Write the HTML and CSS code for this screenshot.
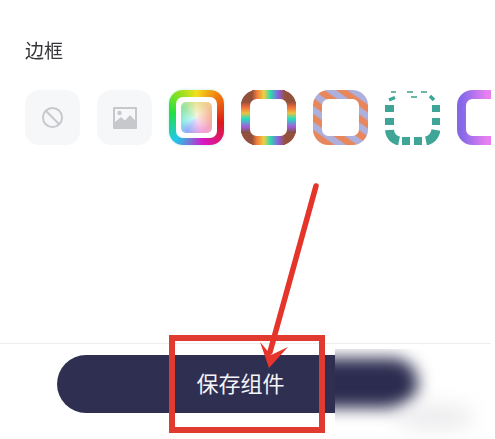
FILE: index.html
```html
<!DOCTYPE html>
<html lang="zh">
<head>
<meta charset="utf-8">
<title>边框</title>
<link rel="stylesheet" href="styles.css">
</head>
<body>
<main class="screen">
  <section class="panel">
    <h2 class="title">边框</h2>
    <div class="swatches">
      <div class="swatch plain">
        <svg class="icon" viewBox="0 0 24 24"><circle cx="12" cy="12" r="10" fill="none" stroke="#c6c8cb" stroke-width="2"/><path d="M5 5 19 19" stroke="#c6c8cb" stroke-width="2"/></svg>
      </div>
      <div class="swatch plain">
        <svg class="icon-img" viewBox="0 0 24 22"><path fill="#c6c8cb" fill-rule="evenodd" d="M1 0h22a1 1 0 0 1 1 1v20a1 1 0 0 1-1 1H1a1 1 0 0 1-1-1V1a1 1 0 0 1 1-1Zm1 2v13l6-5 4 3.500L17 8l5 5.500V2Z"/><circle cx="6.500" cy="6" r="2.200" fill="#c6c8cb"/></svg>
      </div>
      <div class="swatch rainbow"><div class="rainbow-gap"><div class="rainbow-core"></div></div></div>
      <svg class="swatch" viewBox="0 0 55 55">
        <defs>
          <linearGradient id="rbh"><stop offset="0" stop-color="#96503a"/><stop offset=".14" stop-color="#ee7a3a"/><stop offset=".36" stop-color="#f0d040"/><stop offset=".56" stop-color="#30d8b0"/><stop offset=".8" stop-color="#8a5fe0"/><stop offset="1" stop-color="#96503a"/></linearGradient>
          <linearGradient id="rbv" x2="0" y2="1"><stop offset="0" stop-color="#96503a"/><stop offset=".16" stop-color="#ee6a3a"/><stop offset=".36" stop-color="#eec040"/><stop offset=".54" stop-color="#20e0c0"/><stop offset=".78" stop-color="#a060e0"/><stop offset="1" stop-color="#80503a"/></linearGradient>
        </defs>
        <rect x="4.500" y="4.500" width="46" height="46" rx="11" fill="none" stroke="#93503c" stroke-width="9"/>
        <path d="M11 4.500H44M11 50.500H44" stroke="url(#rbh)" stroke-width="9"/>
        <path d="M4.500 12V43M50.500 12V43" stroke="url(#rbv)" stroke-width="9"/>
      </svg>
      <svg class="swatch" viewBox="0 0 55 55">
        <defs>
          <pattern id="stripes" width="13" height="13" patternUnits="userSpaceOnUse" patternTransform="rotate(-55)">
            <rect width="13" height="13" fill="#adb0dc"/><rect width="6.500" height="13" fill="#e8865c"/>
          </pattern>
        </defs>
        <rect x="4.500" y="4.500" width="46" height="46" rx="11" fill="none" stroke="url(#stripes)" stroke-width="9"/>
      </svg>
      <svg class="swatch" viewBox="0 0 55 55">
        <path d="M0 18.500H9M0 31.500H9M47 18.500H56M47 31.500H56" stroke="#3fa596" stroke-width="7" fill="none"/>
        <path d="M4.500 40C5 46 9 50 14 51" fill="none" stroke="#3fa596" stroke-width="9"/>
        <path d="M51 40C50 46 46 50 41 51" fill="none" stroke="#3fa596" stroke-width="9"/>
        <path d="M21 47V55M33 47V55" stroke="#3fa596" stroke-width="8" fill="none"/>
        <path d="M4 10 10 7.500M45 6 49 10" stroke="#3fa596" stroke-width="3.500" fill="none"/>
        <path d="M6 2H11M22 2H28M36 2H42M26 7H32" stroke="#6fb5a8" stroke-width="2" fill="none"/>
      </svg>
      <svg class="swatch" viewBox="0 0 55 55">
        <defs>
          <linearGradient id="neon" x2="0" y2="1"><stop offset="0" stop-color="#8468e8"/><stop offset=".5" stop-color="#88d8fa"/><stop offset="1" stop-color="#7c60ec"/></linearGradient>
          <linearGradient id="neonh"><stop offset="0" stop-color="#8468e8"/><stop offset=".55" stop-color="#e880f2"/></linearGradient>
        </defs>
        <rect x="4.500" y="4.500" width="46" height="46" rx="11" fill="none" stroke="url(#neonh)" stroke-width="9"/>
        <path d="M4.500 14V41" stroke="url(#neon)" stroke-width="9"/>
      </svg>
    </div>
  </section>
  <footer class="footer">
    <button class="save">保存组件</button>
  </footer>
  <div class="smudge"><div class="smudge-bar"></div><div class="smudge-shade"></div></div>
  <div class="highlight"></div>
  <svg class="arrow" viewBox="0 0 495 439">
    <path d="M316 186 270 352" stroke="#e5352b" stroke-width="5.500" stroke-linecap="round" fill="none"/>
    <path d="M260 342 269 368 288 347 271 355Z" fill="#e8352c"/>
  </svg>
</main>
</body>
</html>
```

FILE: styles.css
```css
html, body {
  margin: 0;
  height: 100%;
  background: #fff;
  overflow: hidden;
}
.screen {
  position: relative;
  width: 491px;
  height: 439px;
  display: flex;
  flex-direction: column;
  overflow: hidden;
  font-family: "Noto Sans CJK SC", "Noto Sans", sans-serif;
  filter: blur(.45px);
}
.panel {
  padding: 40px 0 0 25px;
}
.title {
  margin: 0;
  font-size: 19px;
  line-height: 19px;
  font-weight: 400;
  color: #35353a;
}
.swatches {
  display: flex;
  gap: 17px;
  margin-top: 31px;
  width: 480px;
}
.swatch {
  flex: none;
  width: 55px;
  height: 55px;
  box-sizing: border-box;
}
.plain {
  display: flex;
  align-items: center;
  justify-content: center;
  border-radius: 14px;
  background: #f6f7f9;
}
.icon { width: 23px; height: 23px; }
.icon-img { width: 24px; height: 22px; }
.rainbow {
  padding: 7px;
  border-radius: 14px;
  background: conic-gradient(#f4e020, #ee7010 14%, #e01818 28%, #d818c8 46%, #20c8e8 62%, #20e040 78%, #90e020 90%, #f4e020);
  box-shadow: 0 0 3px rgba(120, 220, 200, .5);
}
.rainbow-gap {
  height: 100%;
  padding: 5px;
  box-sizing: border-box;
  border-radius: 7px;
  background: #fff;
}
.rainbow-core {
  height: 100%;
  border-radius: 5px;
  background:
    radial-gradient(circle, rgba(255, 255, 255, .75), rgba(255, 255, 255, .15) 70%),
    conic-gradient(#e8e080, #f4a080 25%, #f090d8 45%, #80a0f8 60%, #70e8e0 70%, #80e090 85%, #e8e080);
}
.footer {
  margin-top: auto;
  height: 84px;
  padding-top: 11px;
  border-top: 1.500px solid #eeeeee;
}
.save {
  display: block;
  width: 367px;
  height: 58px;
  margin-left: 57px;
  padding: 0 0 3px;
  border: 0;
  border-radius: 29px;
  background: #2f2f52;
  color: #f4f4f6;
  font: 400 22px/55px "Noto Sans CJK SC", "Noto Sans", sans-serif;
}
.smudge {
  position: absolute;
  left: 335px;
  top: 349px;
  width: 156px;
  height: 90px;
  background: #fff;
  overflow: hidden;
}
.smudge-bar {
  position: absolute;
  left: -60px;
  top: 9px;
  width: 143px;
  height: 50px;
  border-radius: 25px;
  background: #2c2c50;
  filter: blur(8px);
}
.smudge-shade {
  position: absolute;
  left: 60px;
  top: 55px;
  width: 80px;
  height: 26px;
  border-radius: 50%;
  background: #ececee;
  filter: blur(10px);
}
.highlight {
  position: absolute;
  left: 169px;
  top: 335px;
  width: 156px;
  height: 98px;
  box-sizing: border-box;
  border: 6.500px solid #e13a2f;
}
.arrow {
  position: absolute;
  inset: 0;
  width: 495px;
  height: 439px;
}
```
